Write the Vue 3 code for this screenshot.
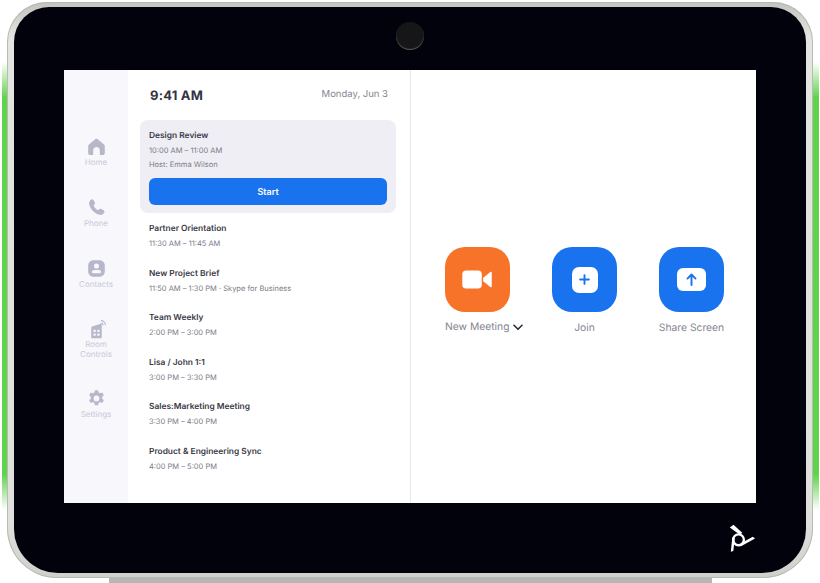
<template>
  <div class="stage">
    <div class="glow glow-left"></div>
    <div class="glow glow-right"></div>
    <div class="stand"></div>
    <div class="shell">
      <div class="bezel">
        <div class="camera"></div>
        <div class="screen">
          <nav class="sidebar">
            <div
              v-for="item in navItems"
              :key="item.label"
              class="nav-item"
              :class="{ tight: item.tight }"
              :style="{ height: item.height + 'px' }"
            >
              <svg viewBox="0 0 24 24" class="nav-icon">
                <path v-for="(d, i) in item.paths" :key="i" :d="d" fill-rule="evenodd" />
              </svg>
              <span class="nav-label">{{ item.label }}</span>
            </div>
          </nav>

          <section class="agenda">
            <header class="agenda-head">
              <span class="clock">9:41 AM</span>
              <span class="date">Monday, Jun 3</span>
            </header>

            <div class="card">
              <div class="title">Design Review</div>
              <div class="sub sub-first">10:00 AM – 11:00 AM</div>
              <div class="sub sub-host">Host: Emma Wilson</div>
              <button class="start">Start</button>
            </div>

            <div v-for="m in meetings" :key="m.title" class="meeting">
              <div class="title">{{ m.title }}</div>
              <div class="sub sub-first">{{ m.time }}</div>
            </div>
          </section>

          <section class="actions">
            <div class="action">
              <div class="tile tile-orange">
                <svg viewBox="0 0 32 20" class="video">
                  <rect x="0" y="0.5" width="20.5" height="19" rx="4" />
                  <path d="M22 8.2 29.5 2.2c.8-.6 1.500-.2 1.500.7v14.200c0 .9-.7 1.300-1.500.7L22 11.800z" />
                </svg>
              </div>
              <div class="action-label action-label-new">
                New Meeting
                <svg viewBox="0 0 10 7" class="chev"><path d="M1 1.300 5 5.300 9 1.300" /></svg>
              </div>
            </div>
            <div class="action">
              <div class="tile tile-blue">
                <div class="inner inner-join">
                  <svg viewBox="0 0 12 12" class="glyph"><path d="M6 1.200v9.600M1.200 6h9.600" /></svg>
                </div>
              </div>
              <div class="action-label">Join</div>
            </div>
            <div class="action">
              <div class="tile tile-blue">
                <div class="inner inner-share">
                  <svg viewBox="0 0 12 14" class="glyph glyph-up"><path d="M6 13V1.800M1.600 6 6 1.600 10.400 6" /></svg>
                </div>
              </div>
              <div class="action-label">Share Screen</div>
            </div>
          </section>
        </div>
        <svg viewBox="0 0 44 40" class="brand">
          <circle cx="18.500" cy="21.800" r="5.400" class="brand-ring" />
          <path d="M9.800 9.500 13.500 6.800 22.500 15 19.500 16.500z" />
          <path d="M10.800 33.800 13.300 33 14.800 20 12.300 19.500z" />
          <path d="M35 20.500 32.800 18.800 20.500 25.500 20.500 28.500z" />
        </svg>
      </div>
    </div>
  </div>
</template>

<script setup>
const navItems = [
  {
    label: 'Home',
    height: 61,
    paths: ['M12 3.200c.5 0 1 .2 1.400.5l7.200 6c.6.5.9 1.200.9 2v7.600c0 1.400-1.100 2.500-2.500 2.500h-3.200v-5.300c0-2.100-1.700-3.800-3.800-3.800s-3.800 1.700-3.800 3.800v5.300H5c-1.400 0-2.500-1.100-2.500-2.500v-7.600c0-.8.3-1.500.9-2l7.200-6c.4-.3.9-.5 1.400-.5z']
  },
  {
    label: 'Phone',
    height: 61,
    paths: ['M6.300 2.800c1-.5 2-.1 2.500.8l1.300 2.700c.4.800.2 1.700-.4 2.300l-1 1c.9 2.500 2.800 4.400 5.300 5.400l1.100-1c.6-.6 1.500-.7 2.300-.3l2.700 1.400c.9.500 1.300 1.600.8 2.500-1 2-2.900 3.200-5 2.800C9.800 19.300 4.800 14.200 3.600 8.100c-.4-2.200.7-4.300 2.700-5.300z']
  },
  {
    label: 'Contacts',
    height: 61,
    paths: ['M8.500 2.500h7c3.300 0 6 2.700 6 6v7c0 3.300-2.700 6-6 6h-7c-3.300 0-6-2.700-6-6v-7c0-3.300 2.700-6 6-6zM12 6.200a2.900 2.900 0 1 0 0 5.800 2.900 2.900 0 0 0 0-5.800zm-2.600 7.500c-1.500 0-2.600 1-2.600 2.200 0 .9.700 1.400 1.500 1.400h7.400c.8 0 1.500-.5 1.500-1.400 0-1.200-1.100-2.200-2.600-2.200z']
  },
  {
    label: 'Room Controls',
    height: 69,
    tight: true,
    paths: [
      'M6 10.200c0-.7.400-1.300 1-1.500l9-3.100c1-.3 2 .4 2 1.500V21c0 .6-.4 1-1 1H7c-.6 0-1-.4-1-1zM8.500 12.300v2.600h2.600v-2.600zm4.400 0v2.600h2.600v-2.600zM8.500 16.600v2.600h2.600v-2.600zm4.400 0v2.600h2.600v-2.600z',
      'M17 1.200a5.800 5.800 0 0 1 5.800 5.800h-1.300a4.500 4.500 0 0 0-4.500-4.500z',
      'M17 3.900a3.100 3.100 0 0 1 3.100 3.100h-1.300a1.800 1.800 0 0 0-1.800-1.800z'
    ]
  },
  {
    label: 'Settings',
    height: 60,
    paths: ['M10.200 2.500h3.600l.6 2.700c.6.200 1.100.5 1.600.9l2.600-.9 1.800 3.100-2 1.900c.1.600.1 1.200 0 1.800l2 1.900-1.800 3.100-2.600-.9c-.5.400-1 .7-1.600.9l-.6 2.700h-3.600l-.6-2.700c-.6-.2-1.100-.5-1.600-.9l-2.600.9-1.800-3.100 2-1.900c-.1-.6-.1-1.200 0-1.800l-2-1.900 1.800-3.100 2.600.9c.5-.4 1-.7 1.600-.9zM12 8.700a3.300 3.300 0 1 0 0 6.600 3.300 3.300 0 0 0 0-6.600z']
  }
]

const meetings = [
  { title: 'Partner Orientation', time: '11:30 AM – 11:45 AM' },
  { title: 'New Project Brief', time: '11:50 AM – 1:30 PM · Skype for Business' },
  { title: 'Team Weekly', time: '2:00 PM – 3:00 PM' },
  { title: 'Lisa / John 1:1', time: '3:00 PM – 3:30 PM' },
  { title: 'Sales:Marketing Meeting', time: '3:30 PM – 4:00 PM' },
  { title: 'Product & Engineering Sync', time: '4:00 PM – 5:00 PM' }
]
</script>

<style>
html, body {
  margin: 0;
  background: #fff;
}
</style>

<style scoped>
.stage {
  position: relative;
  width: 820px;
  height: 583px;
  overflow: hidden;
  font-family: Inter, "Liberation Sans", sans-serif;
  text-rendering: geometricPrecision;
  padding: 2px 7px 5px;
  box-sizing: border-box;
}

.glow {
  position: absolute;
  top: 62px;
  width: 12px;
  height: 448px;
  background: linear-gradient(180deg, rgba(95, 211, 74, 0) 0%, #5fd34a 8%, #5fd34a 92%, rgba(95, 211, 74, 0) 100%);
  filter: blur(0.6px);
}
.glow-left { left: 2px; }
.glow-right { right: 1px; }

.stand {
  position: absolute;
  left: 109px;
  bottom: 0;
  width: 603px;
  height: 10px;
  background: #b6b6b4;
}

.shell {
  position: relative;
  height: 100%;
  box-sizing: border-box;
  padding: 5px 7px;
  border-radius: 40px 40px 50px 50px;
  background: linear-gradient(180deg, #c2c2be 0%, #e4e4e0 6%, #e0e0dc 90%, #cfcfcb 100%);
  box-shadow: inset 0 0 0 1px #b9b9b5;
}

.bezel {
  position: relative;
  height: 100%;
  box-sizing: border-box;
  padding: 63px 50px 70px 50px;
  border-radius: 35px 35px 44px 44px;
  background: #02020d;
}

.camera {
  position: absolute;
  left: 382px;
  top: 15px;
  width: 28px;
  height: 28px;
  border-radius: 50%;
  background: #161618;
  box-shadow: inset 0 -1px 1px #5a5a5a;
}

.screen {
  display: flex;
  height: 433px;
  background: #fff;
}

.sidebar {
  width: 64px;
  flex: none;
  box-sizing: border-box;
  padding-top: 66px;
  background: #f7f7fc;
}

.nav-item {
  display: flex;
  flex-direction: column;
  align-items: center;
}

.nav-icon {
  width: 21px;
  height: 21px;
  flex: none;
  fill: #b7b7ca;
}

.nav-label {
  width: 50px;
  text-align: center;
  font-size: 8px;
  line-height: 10px;
  color: #c9c9d8;
}

.tight .nav-label {
  margin-top: -1px;
}

.agenda {
  width: 283px;
  flex: none;
  box-sizing: border-box;
  padding: 0 14px 0 12px;
  border-right: 1px solid #e8e8ec;
}

.agenda-head {
  display: flex;
  justify-content: space-between;
  align-items: center;
  height: 50px;
  padding: 0 8px 0 10px;
}

.clock {
  font-size: 13px;
  font-weight: 700;
  letter-spacing: 0.2px;
  color: #33333f;
  margin-top: 1px;
}

.date {
  font-size: 9.500px;
  color: #85858f;
  margin-top: -2px;
}

.card {
  box-sizing: border-box;
  height: 93px;
  padding: 10px 9px 0;
  border-radius: 8px;
  background: #eeeef4;
}

.title {
  font-size: 8.400px;
  font-weight: 600;
  line-height: 12px;
  color: #3a3a47;
}

.sub {
  font-size: 7.500px;
  line-height: 10px;
  color: #7c7c87;
}

.sub-first { margin-top: 4px; }
.sub-host { margin-top: 4px; }

.start {
  display: block;
  width: 100%;
  height: 27px;
  margin-top: 8px;
  border: 0;
  border-radius: 6px;
  background: #1a73ee;
  color: #fff;
  font: 600 9px Inter, "Liberation Sans", sans-serif;
}

.meeting {
  height: 44.500px;
  padding: 1px 0 0 9px;
  box-sizing: border-box;
}

.card + .meeting {
  margin-top: 9px;
}

.actions {
  flex: 1;
  display: flex;
  align-items: flex-start;
  box-sizing: border-box;
  padding: 177px 0 0 34px;
  gap: 42px;
}

.action {
  width: 65px;
}

.tile {
  width: 65px;
  height: 65px;
  border-radius: 20px;
  display: flex;
  align-items: center;
  justify-content: center;
}

.tile-orange { background: #f7732a; }
.tile-blue { background: #1a73ee; }

.video {
  width: 31px;
  height: 19px;
  fill: #fff;
}

.inner {
  background: #fff;
  border-radius: 6px;
  display: flex;
  align-items: center;
  justify-content: center;
}

.inner-join { width: 26px; height: 26px; border-radius: 7px; }
.inner-share { width: 29px; height: 23px; }

.glyph {
  width: 11px;
  height: 11px;
  fill: none;
  stroke: #1a73ee;
  stroke-width: 2.100;
  stroke-linecap: round;
  stroke-linejoin: round;
}

.glyph-up {
  width: 11px;
  height: 13px;
}

.action-label {
  margin-top: 10px;
  white-space: nowrap;
  display: flex;
  justify-content: center;
  font-size: 10.300px;
  line-height: 13px;
  color: #85858f;
}

.action-label-new {
  justify-content: flex-start;
  margin-top: 9px;
}

.chev {
  width: 10px;
  height: 7px;
  flex: none;
  margin: 3px 0 0 4px;
  fill: none;
  stroke: #2a2a38;
  stroke-width: 1.600;
  stroke-linecap: round;
  stroke-linejoin: round;
}

.brand {
  position: absolute;
  right: 42px;
  bottom: 15px;
  width: 44px;
  height: 40px;
  fill: #fff;
}

.brand-ring {
  fill: none;
  stroke: #fff;
  stroke-width: 2.400;
}
</style>
